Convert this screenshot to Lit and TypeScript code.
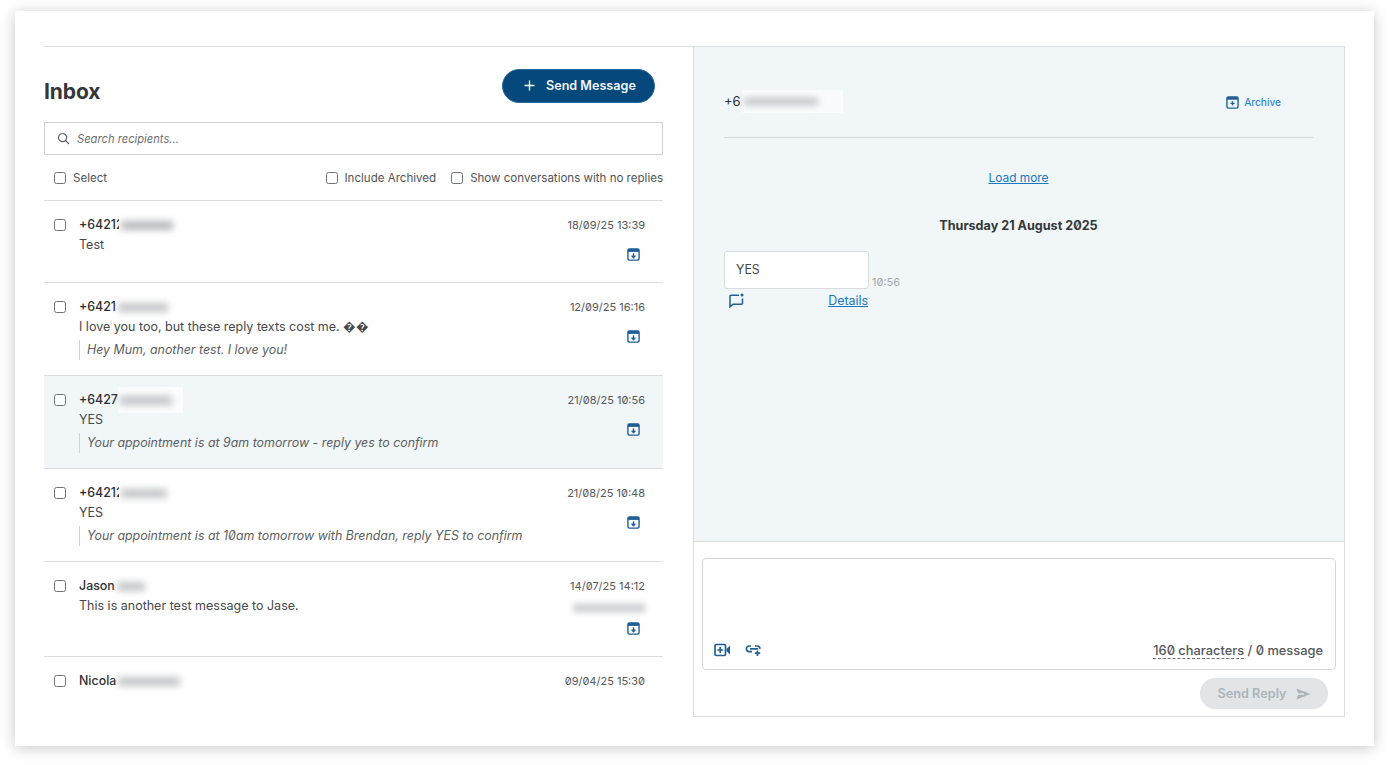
import { LitElement, html, css } from "lit";
import { customElement } from "lit/decorators.js";

const archiveIcon = html`<svg class="arch" viewBox="0 0 14 14" width="13" height="13" aria-hidden="true">
  <rect x="1" y="1" width="12" height="12" rx="1.6" fill="#fff" stroke="#1f5f96" stroke-width="1.5"/>
  <rect x="1" y="1" width="12" height="3.2" fill="#1f5f96"/>
  <path d="M7 5.6v4.4M4.9 8.2 7 10.4l2.1-2.2" fill="none" stroke="#1f5f96" stroke-width="1.5"/>
</svg>`;

interface Row {
  name: string; clip: number; patch: number; bar: number; barTone?: string; msg: string; quote?: string; date: string; hidden?: boolean; tint?: boolean; noIcon?: boolean;
}
const rows: Row[] = [
  { name: "+64212", clip: 5, patch: 58, bar: 52, barTone: "#a9acaf", msg: "Test", date: "18/09/25 13:39" },
  { name: "+6421", clip: 0, patch: 58, bar: 50, msg: "I love you too, but these reply texts cost me. \uFFFD\uFFFD", quote: "Hey Mum, another test. I love you!", date: "12/09/25 16:16" },
  { name: "+6427", clip: 0, patch: 65, bar: 52, msg: "YES", quote: "Your appointment is at 9am tomorrow - reply yes to confirm", date: "21/08/25 10:56", tint: true },
  { name: "+64212", clip: 5, patch: 56, bar: 46, msg: "YES", quote: "Your appointment is at 10am tomorrow with Brendan, reply YES to confirm", date: "21/08/25 10:48" },
  { name: "Jason", clip: 0, patch: 32, bar: 28, msg: "This is another test message to Jase.", date: "14/07/25 14:12", hidden: true },
  { name: "Nicola", clip: 0, patch: 70, bar: 62, msg: "", date: "09/04/25 15:30", noIcon: true },
];

@customElement("app-root")
export class AppRoot extends LitElement {
  static styles = css`
    :host { display: block; height: 765px; background: #fff; font-family: Inter, "Liberation Sans", sans-serif; font-size: 12.4px; color: #3c4043; font-feature-settings: "zero"; overflow: hidden; }
    * { box-sizing: border-box; }
    .page { padding: 11px 15px 19px; height: 765px; }
    .card { height: 735px; background: #fff; box-shadow: 0 2px 14px rgba(0,0,0,.22); padding: 35px 29px 29px; display: grid; grid-template-columns: 649px 652px; }
    .left { border-top: 1px solid #dcdfe0; padding-right: 30px; display: flex; flex-direction: column; min-height: 0; height: 671px; }
    .head { display: flex; justify-content: space-between; align-items: center; padding: 22px 8px 0 0; }
    h1 { margin: 12px 0 0; font-size: 21px; line-height: 22px; font-weight: 700; color: #33373a; letter-spacing: -.1px; }
    .send { display: flex; align-items: center; gap: 11px; height: 34px; width: 153px; padding: 0 0 2px 21px; border-radius: 17px; background: #04487c; border: 1px solid #2a6a9c; color: #f2f6f9; font-weight: 600; font-size: 12.6px; }
    .search { margin-top: 19px; height: 33px; border: 1px solid #cfd3d5; display: flex; align-items: center; gap: 7px; padding-left: 12px; color: #6c7073; font-style: italic; font-size: 11.2px; }
    .filters { height: 46px; border-bottom: 1px solid #d9dcde; display: flex; align-items: center; padding-left: 10px; font-size: 11.55px; }
    .filters .sp { flex: 1; }
    label { display: inline-flex; align-items: center; gap: 7px; color: #505458; }
    label + label { margin-left: 15px; }
    .cb { appearance: none; width: 12px; height: 12px; margin: 0; border: 1px solid #6f7377; border-radius: 2.5px; background: #fff; flex: none; display: block; }
    .list { flex: 1; min-height: 0; overflow: hidden; }
    .row { display: flex; padding: 14px 18px 15px 10px; border-bottom: 1px solid #d9dcde; }
    .row:last-child { border-bottom: 0; }
    .row.tint { background: #f1f6f9; }
    .row > .cb { margin: 4px 13px 0 0; }
    .body { flex: 1; min-width: 0; line-height: 20px; }
    .name { display: flex; align-items: center; height: 20px; color: #2d3033; font-weight: 500; }
    .patch { position: relative; display: flex; align-items: center; height: 26px; margin: -3px 0; background: #fff; }
    .tint .patch { background: #fafcfd; }
    .bar { height: 9px; background: #b9bcbf; filter: blur(3.5px); opacity: .85; margin-left: 2px; }
    .msg { color: #47494c; min-height: 20px; font-size: 12.5px; }
    .quote { margin-top: 3px; padding-left: 7px; border-left: 1px solid #cfd3d5; font-style: italic; color: #5b5e62; height: 20px; font-size: 12.4px; }
    .meta { display: flex; flex-direction: column; align-items: flex-end; color: #55585c; font-size: 11px; line-height: 20px; padding: 0 0 6px; }
    .meta .arch { margin: 13px 5px 0 0; display: block; }
    .meta .hide { width: 72px; height: 8px; margin: 8px 0 -3px; background: #c8cbce; filter: blur(3px); }

    .right { border: 1px solid #dcdfe0; display: flex; flex-direction: column; height: 671px; }
    .conv { flex: 1; min-height: 0; background: #f1f6f9; padding: 0 31px 0 30px; border-bottom: 1px solid #d9dcde; }
    .top { height: 91px; border-bottom: 1px solid #d5d9dc; display: flex; justify-content: space-between; padding: 44px 32px 0 0; color: #2d3033; font-size: 13px; line-height: 20px; }
    .who { display: flex; align-items: center; height: 20px; }
    .who .patch { background: #f9fbfc; height: 23px; width: 101px; margin-left: 1px; }
    .who .bar { width: 74px; background: #b3b8bc; height: 7px; }
    .arch-btn { display: flex; align-items: center; gap: 5px; color: #2f8ad0; font-size: 10.1px; height: 20px; font-weight: 500; margin-top: 1px; }
    .load { text-align: center; margin-top: 30px; line-height: 20px; font-size: 11.9px; }
    a { color: #1878c2; text-decoration: underline; }
    .day { text-align: center; margin-top: 28px; line-height: 20px; font-weight: 700; color: #33373a; font-size: 12.6px; }
    .line { display: flex; align-items: flex-end; margin-top: 15px; gap: 3px; }
    .bubble { width: 145px; height: 38px; background: #fff; border: 1px solid #d9dcde; border-radius: 3px; padding: 0 11px 2px; display: flex; align-items: center; color: #45484b; }
    .time { color: #a5a8ab; font-size: 11px; line-height: 16px; margin-bottom: -1px; }
    .sub { width: 145px; display: flex; justify-content: space-between; align-items: center; padding: 0 1px 0 5px; height: 22px; }
    .compose { height: 174px; padding: 16px 8px 0; background: #fff; }
    .box { height: 112px; border: 1px solid #d5d8da; border-radius: 4px; display: flex; align-items: flex-end; justify-content: space-between; padding: 0 12px 8px 11px; }
    .tools { display: flex; gap: 14px; align-items: center; margin-bottom: 4px; }
    .count { font-weight: 500; color: #54575b; font-size: 12.85px; line-height: 20px; }
    .count span { border-bottom: 1px dashed #6c7073; }
    .reply-wrap { display: flex; justify-content: flex-end; padding: 8px 8px 0 0; }
    .reply { width: 128px; height: 31px; border-radius: 16px; background: #e1e5e8; color: #adb4b9; font-weight: 600; font-size: 12.7px; display: flex; align-items: center; justify-content: center; gap: 9px; }
  `;

  private renderRow(r: Row) {
    return html`<div class="row ${r.tint ? "tint" : ""}">
      <input class="cb" type="checkbox" />
      <div class="body">
        <div class="name">${r.name}<div class="patch" style="width:${r.patch}px;margin-left:${-r.clip}px"><div class="bar" style="width:${r.bar}px;${r.barTone ? `background:${r.barTone}` : ""}"></div></div></div>
        ${r.msg ? html`<div class="msg">${r.msg}</div>` : ""}
        ${r.quote ? html`<div class="quote">${r.quote}</div>` : ""}
      </div>
      <div class="meta">
        <div>${r.date}</div>
        ${r.hidden ? html`<div class="hide"></div>` : ""}
        ${r.noIcon ? "" : archiveIcon}
      </div>
    </div>`;
  }

  render() {
    return html`<div class="page"><div class="card">
      <section class="left">
        <div class="head">
          <h1>Inbox</h1>
          <div class="send">
            <svg width="11" height="11" viewBox="0 0 11 11"><path d="M5.5 0.5v10M0.5 5.5h10" stroke="#fff" stroke-width="1.3"/></svg>
            Send Message
          </div>
        </div>
        <div class="search">
          <svg width="13" height="13" viewBox="0 0 13 13" fill="none" stroke="#5a5e62" stroke-width="1.2"><circle cx="5.6" cy="5.6" r="4.1"/><path d="M8.7 8.7 12 12"/></svg>
          Search recipients...
        </div>
        <div class="filters">
          <label><input class="cb" type="checkbox" />Select</label>
          <div class="sp"></div>
          <label><input class="cb" type="checkbox" />Include Archived</label>
          <label><input class="cb" type="checkbox" />Show conversations with no replies</label>
        </div>
        <div class="list">${rows.map((r) => this.renderRow(r))}</div>
      </section>
      <section class="right">
        <div class="conv">
          <div class="top">
            <div class="who">+6<div class="patch"><div class="bar"></div></div></div>
            <div class="arch-btn">
              <svg viewBox="0 0 14 14" width="13" height="13"><rect x="1" y="1" width="12" height="12" rx="1.6" fill="#f1f6f9" stroke="#1f5f96" stroke-width="1.5"/><rect x="1" y="1" width="12" height="3" fill="#1f5f96"/><path d="M7 5.6v4.6M4.7 7.9h4.6" stroke="#1f5f96" stroke-width="1.5"/></svg>
              Archive
            </div>
          </div>
          <div class="load"><a href="#">Load more</a></div>
          <div class="day">Thursday 21 August 2025</div>
          <div class="line"><div class="bubble">YES</div><div class="time">10:56</div></div>
          <div class="sub">
            <svg width="15" height="15" viewBox="0 0 15 15" fill="none" stroke="#1f5f96" stroke-width="1.5"><path d="M10 2.2H2a1 1 0 0 0-1 1v10.6l3-2.6h8.5a1 1 0 0 0 1-1V5.5"/><circle cx="13" cy="2" r="1.5" fill="#1f5f96" stroke="none"/></svg>
            <a href="#">Details</a>
          </div>
        </div>
        <div class="compose">
          <div class="box">
            <div class="tools">
              <svg width="17" height="14" viewBox="0 0 17 14" fill="none" stroke="#1f5f96" stroke-width="1.7"><rect x="1" y="1.5" width="10.5" height="11" rx="1.2"/><path d="M6.2 4v6M3.3 7h5.8"/><path d="M12.5 6 16 2.5v9L12.5 8z" fill="#1f5f96" stroke="none"/></svg>
              <svg width="17" height="14" viewBox="0 0 17 14" fill="none" stroke="#1f5f96" stroke-width="1.7"><path d="M6 3H4.2a2.8 2.8 0 0 0 0 5.6H7M10 3h2a3 3 0 0 1 3 2.8M5 5.8h8"/><path d="M12.5 7.5v5.5M9.8 10.2h5.4"/></svg>
            </div>
            <div class="count"><span>160 characters</span> / 0 message</div>
          </div>
          <div class="reply-wrap">
            <div class="reply">Send Reply
              <svg width="15" height="12" viewBox="0 0 15 12"><path d="M0.5 0.5 14.5 6 0.5 11.5 2 6.8h6V5.2H2z" fill="#adb4b9"/></svg>
            </div>
          </div>
        </div>
      </section>
    </div></div>`;
  }
}
